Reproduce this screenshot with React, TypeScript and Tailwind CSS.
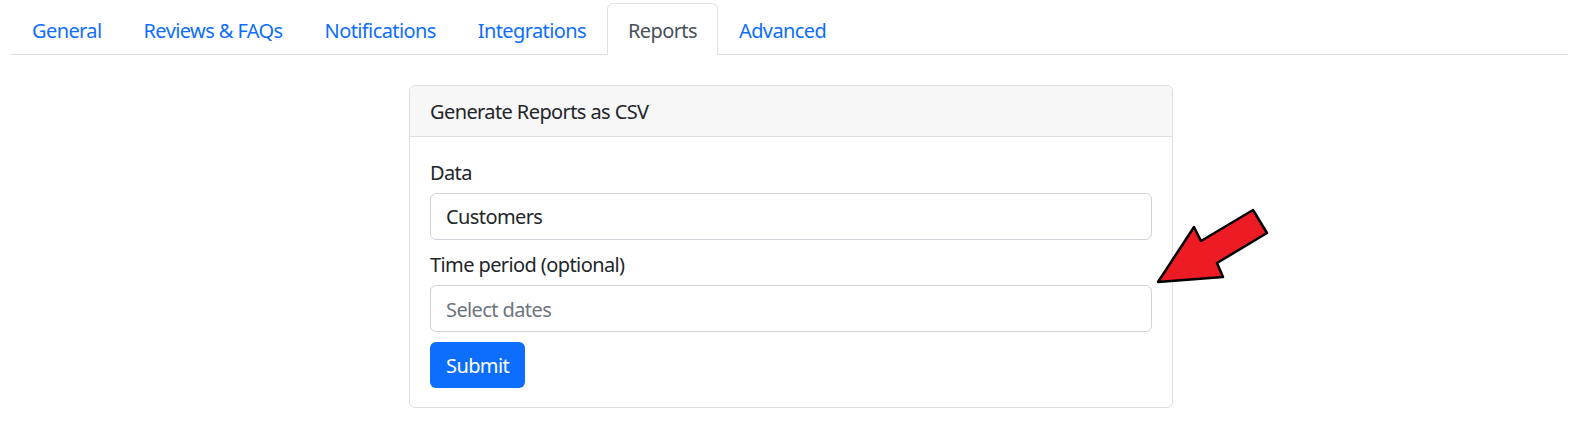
import { useState } from 'react';

const tabs = ['General', 'Reviews & FAQs', 'Notifications', 'Integrations', 'Reports', 'Advanced'];

function Arrow() {
	return (
		<svg
			className="pointer-events-none absolute left-0 top-0"
			width="1579"
			height="421"
			viewBox="0 0 1579 421"
		>
			<polygon
				points="1158,282 1194,227 1201,241 1253,210 1267,233 1217,263 1223,277"
				fill="#ed1c24"
				stroke="#000"
				strokeWidth="2.5"
				strokeLinejoin="round"
			/>
		</svg>
	);
}

export default function App() {
	const [active, setActive] = useState('Reports');

	return (
		<div className="relative h-[421px] w-[1579px] overflow-hidden bg-white font-['Noto_Sans',sans-serif] text-[20px] leading-[30px] tracking-[-0.6px] text-[#212529]">
			<ul className="mx-[11px] mt-[3px] flex border-b border-[#dee2e6]">
				{tabs.map((tab) => (
					<li key={tab} className="-mb-px">
						<button
							type="button"
							onClick={() => setActive(tab)}
							className={
								tab === active
									? 'rounded-t-[6px] border border-[#dee2e6] border-b-white bg-white px-5 pb-[8px] pt-[12px] text-[#495057]'
									: 'rounded-t-[6px] border border-transparent px-5 pb-[8px] pt-[12px] text-[#0d6efd]'
							}
						>
							{tab}
						</button>
					</li>
				))}
			</ul>

			<div className="flex justify-center pl-[3px] pt-[30px]">
				<div className="w-[764px] rounded-[6px] border border-[#dfdfdf]">
					<div className="rounded-t-[6px] border-b border-[#dfdfdf] bg-[#f7f7f7] px-5 pb-[9px] pt-[11px]">
						Generate Reports as CSV
					</div>
					<div className="p-5 pb-[19px]">
						<div className="mb-[10px]">
							<label className="mb-[5px] block pt-px">Data</label>
							<div className="h-[47px] rounded-[6px] border border-[#ced4da] px-[15px] pb-[6px] pt-[8px]">
								Customers
							</div>
						</div>
						<div className="mb-[10px]">
							<label className="mb-[5px] block">Time period (optional)</label>
							<input
								type="text"
								placeholder="Select dates"
								className="block h-[47px] w-full rounded-[6px] border border-[#ced4da] px-[15px] pt-[2px] tracking-[-0.6px] outline-none placeholder:text-[#6c757d]"
							/>
						</div>
						<button
							type="button"
							className="h-[46px] rounded-[6px] bg-[#0d6efd] px-[16px] pt-[2px] tracking-[-0.6px] text-white"
						>
							Submit
						</button>
					</div>
				</div>
			</div>

			<Arrow />
		</div>
	);
}
